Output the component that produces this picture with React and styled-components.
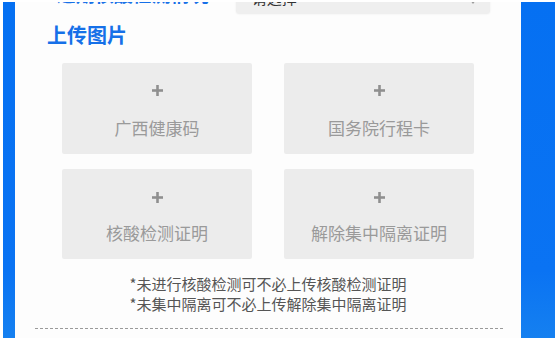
import React from 'react';
import styled, { createGlobalStyle } from 'styled-components';

const Global = createGlobalStyle`
  html, body { margin: 0; padding: 0; background: #fff; }
  body { font-family: "Noto Sans CJK SC", "Noto Sans", sans-serif; }
  * { box-sizing: border-box; }
`;

const Page = styled.div`
  width: 555px;
  height: 340px;
  padding: 2px 0 2px 3px;
  background: #fff;
  overflow: hidden;
`;

const Frame = styled.div`
  display: flex;
  height: 100%;
  padding: 0 34px 0 12px;
  background: linear-gradient(180deg, #0570f2 0%, #0a73f3 80%, #1580f0 100%);
`;

const Card = styled.div`
  flex: 1;
  background: #fdfdfd;
  display: flex;
  flex-direction: column;
  overflow: hidden;
  padding: 0 18px 0 32px;
`;

const TopRow = styled.div`
  display: flex;
  align-items: center;
  height: 32px;
  margin-top: -21px;
  gap: 27px;
  padding-right: 13px;
`;

const FieldLabel = styled.div`
  color: #1670e8;
  font-size: 19px;
  font-weight: 700;
  white-space: nowrap;
  margin-top: -8px;
`;

const Select = styled.div`
  flex: 1;
  height: 32px;
  background: #efefef;
  border-radius: 3px;
  box-shadow: 0 1px 2px rgba(0, 0, 0, 0.08);
  display: flex;
  align-items: center;
  justify-content: space-between;
  padding: 0 14px 0 16px;
  font-size: 15px;
  color: #333;
`;

const Caret = styled.span`
  width: 0;
  height: 0;
  border-left: 3px solid transparent;
  border-right: 3px solid transparent;
  border-top: 4px solid #999;
  margin-top: 10px;
`;

const Title = styled.h2`
  margin: 8px 0 0;
  font-size: 20px;
  line-height: 28px;
  font-weight: 700;
  color: #1670e8;
`;

const Grid = styled.div`
  display: grid;
  grid-template-columns: 190px 190px;
  grid-template-rows: 91px 90px;
  column-gap: 32px;
  row-gap: 15px;
  margin: 14px 0 0 15px;
`;

const Tile = styled.div`
  background: #ececec;
  border-radius: 2px;
  display: flex;
  flex-direction: column;
  align-items: center;
  padding-top: ${({ $row }) => ($row === 2 ? 23 : 22)}px;
  gap: ${({ $row }) => ($row === 2 ? 19 : 21)}px;
`;

const TileText = styled.div`
  font-size: 17px;
  line-height: 22px;
  color: #9a9a9a;
`;

const Plus = () => (
  <svg width="11" height="11" viewBox="0 0 11 11">
    <rect x="0" y="4.2" width="11" height="2.6" fill="#8f8f8f" />
    <rect x="4.2" y="0" width="2.6" height="11" fill="#8f8f8f" />
  </svg>
);

const Notes = styled.div`
  margin: 15px 0 0 -14px;
  text-align: center;
  font-size: 15px;
  line-height: 20px;
  color: #555;
`;

const Divider = styled.div`
  margin: 14px 0 0 -12px;
  border-top: 1px dashed #9a9a9a;
`;

const items = [
  ['广西健康码', 1],
  ['国务院行程卡', 1],
  ['核酸检测证明', 2],
  ['解除集中隔离证明', 2],
];

export default function App() {
  return (
    <>
      <Global />
      <Page>
        <Frame>
          <Card>
            <TopRow>
              <FieldLabel>*近期核酸检测情况</FieldLabel>
              <Select>
                <span>请选择</span>
                <Caret />
              </Select>
            </TopRow>
            <Title>上传图片</Title>
            <Grid>
              {items.map(([label, row]) => (
                <Tile key={label} $row={row}>
                  <Plus />
                  <TileText>{label}</TileText>
                </Tile>
              ))}
            </Grid>
            <Notes>
              <div>*未进行核酸检测可不必上传核酸检测证明</div>
              <div>*未集中隔离可不必上传解除集中隔离证明</div>
            </Notes>
            <Divider />
          </Card>
        </Frame>
      </Page>
    </>
  );
}
